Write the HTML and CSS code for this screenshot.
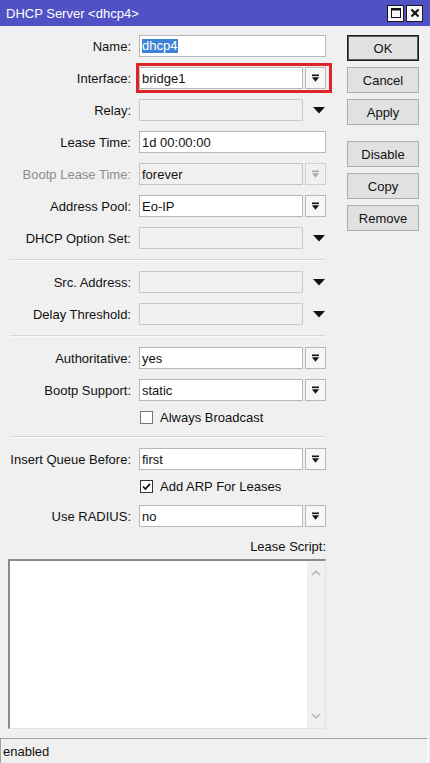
FILE: index.html
```html
<!DOCTYPE html>
<html>
<head>
<meta charset="utf-8">
<link rel="stylesheet" href="styles.css">
</head>
<body>
<div class="window">
  <div class="titlebar">
    <span class="title">DHCP Server &lt;dhcp4&gt;</span>
    <div class="tb-buttons">
      <span class="tb-btn"><svg width="12" height="12" viewBox="0 0 12 12"><rect x="1.5" y="1.5" width="9" height="9" fill="none" stroke="#111" stroke-width="1"/><rect x="1" y="1" width="10" height="2.5" fill="#111"/></svg></span>
      <span class="tb-btn"><svg width="12" height="12" viewBox="0 0 12 12"><path d="M2.5 2.5L9.5 9.5M9.5 2.5L2.5 9.5" stroke="#111" stroke-width="2.2" fill="none"/></svg></span>
    </div>
  </div>
  <div class="content">
    <div class="form">
      <div class="row"><span class="lbl">Name:</span><div class="input full"><span class="sel">dhcp4</span></div></div>
      <div class="row"><span class="lbl">Interface:</span>
        <div class="combo hl"><div class="input half">bridge1</div><span class="dd"><svg width="9" height="9" viewBox="0 0 9 9"><rect x="1" y="0.5" width="7" height="1.6" fill="#111"/><path d="M1 3.2h7L4.5 7.8z" fill="#111"/></svg></span></div></div>
      <div class="row"><span class="lbl">Relay:</span>
        <div class="combo"><div class="input half off"></div><span class="tri"><svg width="12" height="7" viewBox="0 0 12 7"><path d="M0 0h12L6 6.5z" fill="#111"/></svg></span></div></div>
      <div class="row"><span class="lbl">Lease Time:</span><div class="input full">1d 00:00:00</div></div>
      <div class="row"><span class="lbl dim">Bootp Lease Time:</span>
        <div class="combo"><div class="input half grey">forever</div><span class="dd dis"><svg width="9" height="9" viewBox="0 0 9 9"><rect x="1" y="0.5" width="7" height="1.6" fill="#a8a8a8"/><path d="M1 3.2h7L4.5 7.8z" fill="#a8a8a8"/></svg></span></div></div>
      <div class="row"><span class="lbl">Address Pool:</span>
        <div class="combo"><div class="input half">Eo-IP</div><span class="dd"><svg width="9" height="9" viewBox="0 0 9 9"><rect x="1" y="0.5" width="7" height="1.6" fill="#111"/><path d="M1 3.2h7L4.5 7.8z" fill="#111"/></svg></span></div></div>
      <div class="row"><span class="lbl">DHCP Option Set:</span>
        <div class="combo"><div class="input half off"></div><span class="tri"><svg width="12" height="7" viewBox="0 0 12 7"><path d="M0 0h12L6 6.5z" fill="#111"/></svg></span></div></div>

      <div class="sep"></div>

      <div class="row"><span class="lbl">Src. Address:</span>
        <div class="combo"><div class="input half off"></div><span class="tri"><svg width="12" height="7" viewBox="0 0 12 7"><path d="M0 0h12L6 6.5z" fill="#111"/></svg></span></div></div>
      <div class="row"><span class="lbl">Delay Threshold:</span>
        <div class="combo"><div class="input half off"></div><span class="tri"><svg width="12" height="7" viewBox="0 0 12 7"><path d="M0 0h12L6 6.5z" fill="#111"/></svg></span></div></div>

      <div class="sep"></div>

      <div class="row"><span class="lbl">Authoritative:</span>
        <div class="combo"><div class="input half">yes</div><span class="dd"><svg width="9" height="9" viewBox="0 0 9 9"><rect x="1" y="0.5" width="7" height="1.6" fill="#111"/><path d="M1 3.2h7L4.5 7.8z" fill="#111"/></svg></span></div></div>
      <div class="row"><span class="lbl">Bootp Support:</span>
        <div class="combo"><div class="input half">static</div><span class="dd"><svg width="9" height="9" viewBox="0 0 9 9"><rect x="1" y="0.5" width="7" height="1.6" fill="#111"/><path d="M1 3.2h7L4.5 7.8z" fill="#111"/></svg></span></div></div>
      <div class="check-row"><span class="box light"></span><span class="check-label">Always Broadcast</span></div>

      <div class="sep"></div>

      <div class="row"><span class="lbl">Insert Queue Before:</span>
        <div class="combo"><div class="input half">first</div><span class="dd"><svg width="9" height="9" viewBox="0 0 9 9"><rect x="1" y="0.5" width="7" height="1.6" fill="#111"/><path d="M1 3.2h7L4.5 7.8z" fill="#111"/></svg></span></div></div>
      <div class="check-row"><span class="box"><svg width="11" height="11" viewBox="0 0 11 11"><path d="M2 5.5L4.4 8L9 2.8" stroke="#111" stroke-width="1.8" fill="none"/></svg></span><span class="check-label">Add ARP For Leases</span></div>
      <div class="row"><span class="lbl">Use RADIUS:</span>
        <div class="combo"><div class="input half">no</div><span class="dd"><svg width="9" height="9" viewBox="0 0 9 9"><rect x="1" y="0.5" width="7" height="1.6" fill="#111"/><path d="M1 3.2h7L4.5 7.8z" fill="#111"/></svg></span></div></div>

      <div class="script-label">Lease Script:</div>
      <div class="textarea">
        <div class="scroll">
          <svg width="10" height="6" viewBox="0 0 10 6"><path d="M1 5L5 1.2L9 5" stroke="#b0b0b0" stroke-width="1.3" fill="none"/></svg>
          <svg width="10" height="6" viewBox="0 0 10 6"><path d="M1 1L5 4.8L9 1" stroke="#b0b0b0" stroke-width="1.3" fill="none"/></svg>
        </div>
      </div>
    </div>
    <div class="actions">
      <div class="btn default">OK</div>
      <div class="btn">Cancel</div>
      <div class="btn">Apply</div>
      <div class="btn spaced">Disable</div>
      <div class="btn">Copy</div>
      <div class="btn">Remove</div>
    </div>
  </div>
  <div class="status">enabled</div>
</div>
</body>
</html>
```
FILE: styles.css
```css
html, body {
  margin: 0;
  padding: 0;
}
body {
  font-family: "Liberation Sans", Arial, sans-serif;
  font-size: 13px;
  color: #111;
  background: #f0f0f0;
}
.window {
  width: 430px;
  height: 763px;
  display: flex;
  flex-direction: column;
  overflow: hidden;
}
.titlebar {
  flex: none;
  height: 26px;
  box-sizing: border-box;
  background: #5151c6;
  color: #fff;
  display: flex;
  align-items: center;
  justify-content: space-between;
  padding: 0 7px 0 6px;
}
.title {
  font-size: 13px;
}
.tb-buttons {
  display: flex;
  gap: 2px;
}
.tb-btn {
  width: 17px;
  height: 17px;
  box-sizing: border-box;
  background: #f7f7f7;
  border: 1px solid #1a1a1a;
  display: flex;
  align-items: center;
  justify-content: center;
}
.content {
  flex: 1;
  display: flex;
}
.form {
  width: 326px;
  display: flex;
  flex-direction: column;
  gap: 10px;
  padding-top: 9px;
}
.row {
  display: flex;
  align-items: center;
  height: 22px;
}
.lbl {
  width: 131px;
  margin-right: 8px;
  text-align: right;
  white-space: nowrap;
}
.lbl.dim {
  color: #8c8c8c;
}
.input {
  height: 22px;
  box-sizing: border-box;
  border: 1px solid #b8b8b8;
  background: #fff;
  padding: 0 2px;
  display: flex;
  align-items: center;
  white-space: nowrap;
}
.input.full {
  width: 187px;
}
.input.half {
  width: 164px;
}
.input.off {
  background: #f0f0f0;
  border-color: #c9c9c9;
}
.input.grey {
  background: #f0f0f0;
  border-color: #c4c4c4;
}
.sel {
  background: #3c82d7;
  color: #fff;
  line-height: 14px;
  padding: 0 1px 0 0;
}
.combo {
  display: flex;
  position: relative;
}
.combo.hl::after {
  content: "";
  position: absolute;
  left: -3px;
  right: -6px;
  top: -4px;
  bottom: -4px;
  border: 3px solid #e0232b;
  pointer-events: none;
}
.dd {
  width: 21px;
  height: 22px;
  margin-left: 2px;
  box-sizing: border-box;
  border: 1px solid #b8b8b8;
  background: #f7f7f7;
  display: flex;
  align-items: center;
  justify-content: center;
}
.dd.dis {
  border-color: #cfcfcf;
  background: #f0f0f0;
}
.tri {
  width: 21px;
  margin-left: 2px;
  display: flex;
  align-items: center;
  justify-content: flex-end;
  padding-right: 1px;
  box-sizing: border-box;
}
.sep {
  width: 315px;
  margin-left: 10px;
  height: 1px;
  background: #d6d6d6;
  border-bottom: 1px solid #fafafa;
}
.check-row {
  display: flex;
  align-items: center;
  height: 17px;
  margin-top: -2px;
  padding-left: 140px;
}
.box {
  width: 13px;
  height: 13px;
  box-sizing: border-box;
  border: 1px solid #333;
  background: #fff;
  display: flex;
  align-items: center;
  justify-content: center;
}
.box.light {
  border-color: #777;
}
.check-label {
  margin-left: 7px;
}
.script-label {
  width: 326px;
  text-align: right;
  line-height: 15px;
  margin-top: 2px;
}
.textarea {
  margin: -5px 0 0 8px;
  width: 318px;
  height: 170px;
  box-sizing: border-box;
  background: #fff;
  border-style: solid;
  border-width: 2px 1px 1px 2px;
  border-color: #8a8a8a #e4e4e4 #e4e4e4 #8a8a8a;
  display: flex;
  justify-content: flex-end;
}
.scroll {
  width: 18px;
  background: #f0f0f0;
  display: flex;
  flex-direction: column;
  justify-content: space-between;
  align-items: center;
  padding: 9px 0 9px;
}
.actions {
  width: 72px;
  margin-left: 21px;
  padding-top: 9px;
  display: flex;
  flex-direction: column;
  gap: 6px;
}
.btn {
  height: 26px;
  box-sizing: border-box;
  border: 1px solid #adadad;
  background: #e1e1e1;
  display: flex;
  align-items: center;
  justify-content: center;
}
.btn.default {
  border-color: #1e1e1e;
  box-shadow: inset 0 0 0 1px #5a5a5a;
}
.btn.spaced {
  margin-top: 10px;
}
.status {
  flex: none;
  height: 25px;
  box-sizing: border-box;
  border-top: 1px solid #a0a0a0;
  border-left: 1px solid #a0a0a0;
  border-right: 1px solid #fff;
  margin-right: 2px;
  padding-left: 2px;
  display: flex;
  align-items: center;
}
```
